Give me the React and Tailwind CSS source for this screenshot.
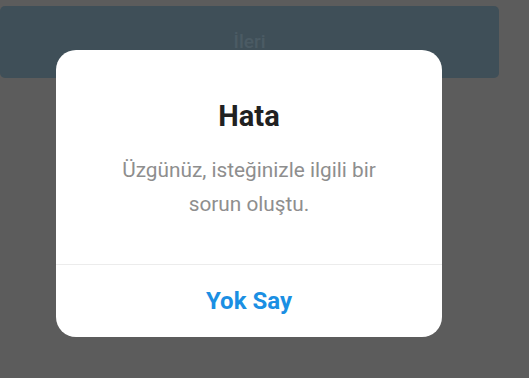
export default function App() {
  return (
    <div className="relative w-[529px] h-[378px] overflow-hidden bg-[#5c5c5c] font-['Roboto',sans-serif]">
      <div className="pt-[6px] pr-[30px]">
        <div className="h-[72px] rounded-[5px] bg-[#3f4f58] flex items-center justify-center">
          <span className="text-[19px] font-medium text-[#4b5b64]">İleri</span>
        </div>
      </div>

      <div className="absolute left-[56px] top-[50px] w-[386px] h-[287px] rounded-[20px] bg-white flex flex-col">
        <div className="flex-1 flex flex-col items-center pt-[49px]">
          <h2 className="text-[29px] leading-[34px] font-bold text-[#212121]">Hata</h2>
          <p className="mt-[20px] text-[20.8px] leading-[34px] text-[#8e8e8e] text-center">
            Üzgünüz, isteğinizle ilgili bir
            <br />
            sorun oluştu.
          </p>
        </div>
        <div className="border-t border-[#ececec] h-[73px] flex items-center justify-center">
          <button className="text-[24px] font-bold text-[#1b8fe3]">Yok Say</button>
        </div>
      </div>
    </div>
  );
}
